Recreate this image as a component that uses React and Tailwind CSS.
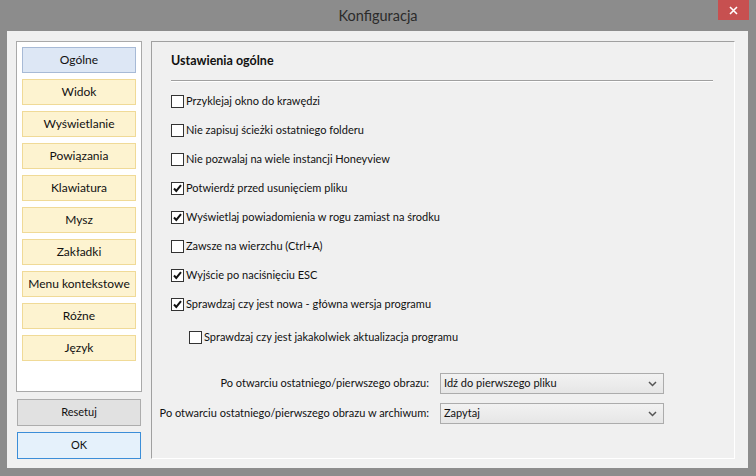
import React from "react";

const navItems = [
  "Ogólne",
  "Widok",
  "Wyświetlanie",
  "Powiązania",
  "Klawiatura",
  "Mysz",
  "Zakładki",
  "Menu kontekstowe",
  "Różne",
  "Język",
];

const options = [
  { label: "Przyklejaj okno do krawędzi", checked: false },
  { label: "Nie zapisuj ścieżki ostatniego folderu", checked: false },
  { label: "Nie pozwalaj na wiele instancji Honeyview", checked: false },
  { label: "Potwierdź przed usunięciem pliku", checked: true },
  { label: "Wyświetlaj powiadomienia w rogu zamiast na środku", checked: true },
  { label: "Zawsze na wierzchu (Ctrl+A)", checked: false },
  { label: "Wyjście po naciśnięciu ESC", checked: true },
  { label: "Sprawdzaj czy jest nowa - główna wersja programu", checked: true },
];

const CheckBox = ({ checked }) => (
  <span className="flex h-[13px] w-[13px] shrink-0 items-center justify-center border border-[#333] bg-white">
    {checked && (
      <svg width="9" height="9" viewBox="0 0 9 9">
        <path d="M1 4.5 L3.3 7 L8 1.2" fill="none" stroke="#111" strokeWidth="2" />
      </svg>
    )}
  </span>
);

const Select = ({ value }) => (
  <div className="flex h-[21px] w-[224px] shrink-0 items-center justify-between border border-[#acacac] bg-gradient-to-b from-[#f2f2f2] to-[#e6e6e6] pl-[3px] pr-[6px] text-[#111]">
    <span>{value}</span>
    <svg width="9" height="6" viewBox="0 0 9 6">
      <path d="M1 1 L4.5 4.5 L8 1" fill="none" stroke="#555" strokeWidth="1.5" />
    </svg>
  </div>
);

export default function App() {
  return (
    <div
      className="flex h-[476px] w-[756px] flex-col bg-[#8c8c8c] text-[11px] text-[#111]"
      style={{ fontFamily: 'Lato, "Noto Sans", sans-serif' }}
    >
      {/* pasek tytułu */}
      <div className="relative flex h-[31px] shrink-0 items-center justify-center">
        <span className="text-[14.5px] text-[#2b2b2b]">Konfiguracja</span>
        <div className="absolute right-[7px] top-0 flex h-[20px] w-[31px] items-center justify-center bg-[#c75050]">
          <svg width="9" height="9" viewBox="0 0 9 9">
            <path d="M1 1 L8 8 M8 1 L1 8" stroke="#fff" strokeWidth="1.6" />
          </svg>
        </div>
      </div>

      <div className="mb-[8px] ml-[7px] mr-[8px] flex flex-1 gap-[9px] bg-[#f0f0f0] pb-[9px] pl-[9px] pr-[13px] pt-[10px]">
        {/* lewa kolumna */}
        <div className="flex w-[126px] flex-col">
          <div className="flex h-[351px] flex-col gap-[6px] border border-[#a9a9a9] bg-white px-[5px] pt-[5px] text-[12px]">
            {navItems.map((item, i) => (
              <div
                key={item}
                className={
                  i === 0
                    ? "flex h-[26px] items-center justify-center border border-[#a7bad6] bg-[#dde7f5]"
                    : "flex h-[26px] items-center justify-center border border-[#f0da97] bg-[#fdf3d0]"
                }
              >
                {item}
              </div>
            ))}
          </div>
          <div className="ml-[1px] mt-[7px] flex h-[27px] w-[124px] items-center justify-center border border-[#adadad] bg-[#e1e1e1]">
            Resetuj
          </div>
          <div className="ml-[1px] mt-[6px] flex h-[27px] w-[124px] items-center justify-center border border-[#3c8ed8] bg-[#e5f1fb]">
            OK
          </div>
        </div>

        {/* prawy panel */}
        <div className="flex flex-1 flex-col border border-b-white border-l-[#a0a0a0] border-r-white border-t-[#a0a0a0] pl-[19px] pr-[21px]">
          <div className="flex h-[38px] items-center pt-[1px] text-[12.5px] font-bold">Ustawienia ogólne</div>
          <div className="border-b border-t border-b-white border-t-[#a0a0a0]" />
          <div className="mt-[5px] flex flex-col">
            {options.map((o) => (
              <div key={o.label} className="flex h-[29px] items-center gap-[2px]">
                <CheckBox checked={o.checked} />
                <span>{o.label}</span>
              </div>
            ))}
            <div className="mt-[4px] flex h-[29px] items-center gap-[2px] pl-[18px]">
              <CheckBox checked={false} />
              <span>Sprawdzaj czy jest jakakolwiek aktualizacja programu</span>
            </div>
          </div>
          <div className="-ml-[12px] mt-[21px] flex flex-col gap-[9px]">
            <div className="flex items-center justify-end gap-[11px] whitespace-nowrap pr-[49px]">
              <span>Po otwarciu ostatniego/pierwszego obrazu:</span>
              <Select value="Idź do pierwszego pliku" />
            </div>
            <div className="flex items-center justify-end gap-[11px] whitespace-nowrap pr-[49px]">
              <span>Po otwarciu ostatniego/pierwszego obrazu w archiwum:</span>
              <Select value="Zapytaj" />
            </div>
          </div>
        </div>
      </div>
    </div>
  );
}
